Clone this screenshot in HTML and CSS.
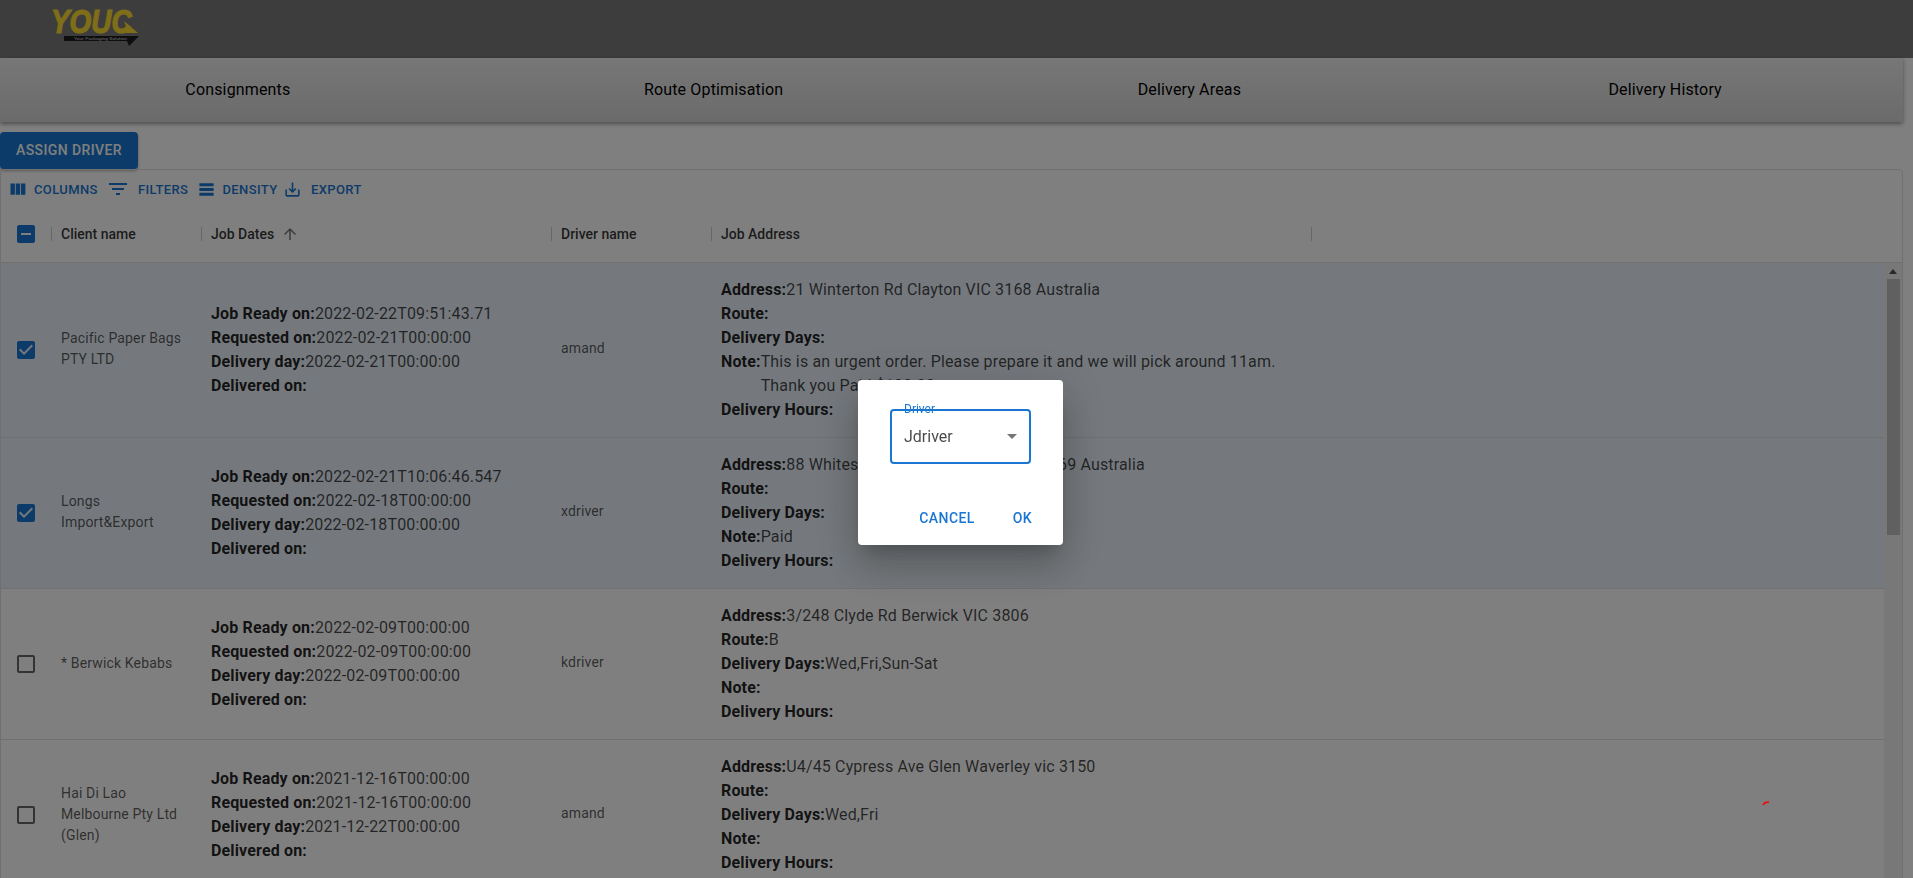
FILE: index.html
```html
<!DOCTYPE html>
<html lang="en">
<head>
    <meta charset="UTF-8">
    <meta name="viewport" content="width=device-width, initial-scale=1.0">
    <title>Consignments</title>
    <link rel="stylesheet" href="styles.css">
</head>
<body>
    <!-- Shared icons -->
    <svg class="icon-defs" aria-hidden="true">
        <symbol id="ic-checked" viewBox="0 0 24 24"><path d="M19 3H5c-1.11 0-2 .9-2 2v14c0 1.1.89 2 2 2h14c1.11 0 2-.9 2-2V5c0-1.1-.89-2-2-2zm-9 14l-5-5 1.41-1.41L10 14.17l7.59-7.59L19 8l-9 9z"/></symbol>
        <symbol id="ic-blank" viewBox="0 0 24 24"><path d="M19 5v14H5V5h14m0-2H5c-1.1 0-2 .9-2 2v14c0 1.1.9 2 2 2h14c1.1 0 2-.9 2-2V5c0-1.1-.9-2-2-2z"/></symbol>
        <symbol id="ic-partial" viewBox="0 0 24 24"><path d="M19 3H5c-1.1 0-2 .9-2 2v14c0 1.1.9 2 2 2h14c1.1 0 2-.9 2-2V5c0-1.1-.9-2-2-2zm-2 10H7v-2h10v2z"/></symbol>
    </svg>

    <header class="topbar">
        <svg class="logo" width="130" height="48" viewBox="0 0 130 48" role="img" aria-label="YOUC">
            <text class="logo-word" transform="translate(1 28) scale(0.82 1)">YOUC</text>
            <polygon class="logo-gold" points="74,16 88,28 70,28 70,24 77,24"/>
            <polygon class="logo-band" points="14,31 89,31 79,41 77,36 14,36"/>
            <text class="logo-tag" x="24" y="35" textLength="53" lengthAdjust="spacingAndGlyphs">Your Packaging Solution</text>
        </svg>
    </header>

    <nav class="tabs">
        <a class="tab">Consignments</a>
        <a class="tab">Route Optimisation</a>
        <a class="tab">Delivery Areas</a>
        <a class="tab">Delivery History</a>
    </nav>

    <button class="assign-btn">ASSIGN DRIVER</button>

    <section class="grid">
        <div class="toolbar">
            <span class="tool tool-columns">
                <svg class="tool-icon" width="21" height="21" viewBox="0 0 24 24"><path d="M10 18h5V5h-5v13zm-6 0h5V5H4v13zM16 5v13h5V5h-5z"/></svg>
                COLUMNS
            </span>
            <span class="tool tool-filters">
                <svg class="tool-icon" width="24" height="24" viewBox="0 0 24 24"><path d="M10 18h4v-2h-4v2zM3 6v2h18V6H3zm3 7h12v-2H6v2z"/></svg>
                FILTERS
            </span>
            <span class="tool tool-density">
                <svg class="tool-icon" width="19" height="19" viewBox="0 0 24 24"><path d="M21 8H3V4h18v4zm0 2H3v4h18v-4zm0 6H3v4h18v-4z"/></svg>
                DENSITY
            </span>
            <span class="tool tool-export">
                <svg class="tool-icon" width="19" height="19" viewBox="0 0 24 24"><path d="M19 12v7H5v-7H3v7c0 1.1.9 2 2 2h14c1.1 0 2-.9 2-2v-7h-2zm-6 .67l2.59-2.58L17 11.5l-5 5-5-5 1.41-1.41L11 12.67V3h2z"/></svg>
                EXPORT
            </span>
        </div>

        <div class="row-cols head-row">
            <div class="check-cell"><svg class="check on" width="24" height="24"><use href="#ic-partial"/></svg></div>
            <div class="head-cell">Client name</div>
            <div class="head-cell">Job Dates
                <svg class="sort-icon" width="18" height="18" viewBox="0 0 24 24"><path d="M4 12l1.41 1.41L11 7.83V20h2V7.83l5.58 5.59L20 12l-8-8-8 8z"/></svg>
            </div>
            <div class="head-cell">Driver name</div>
            <div class="head-cell head-last">Job Address</div>
        </div>

        <div class="grid-body">
            <div class="rows">
                <div class="row-cols row selected">
                    <div class="check-cell"><svg class="check on" width="24" height="24"><use href="#ic-checked"/></svg></div>
                    <div class="cell client">Pacific Paper Bags PTY LTD</div>
                    <div class="cell details">
                        <p><b>Job Ready on:</b>2022-02-22T09:51:43.71</p>
                        <p><b>Requested on:</b>2022-02-21T00:00:00</p>
                        <p><b>Delivery day:</b>2022-02-21T00:00:00</p>
                        <p><b>Delivered on:</b></p>
                    </div>
                    <div class="cell">amand</div>
                    <div class="cell details">
                        <p><b>Address:</b>21 Winterton Rd Clayton VIC 3168 Australia</p>
                        <p><b>Route:</b></p>
                        <p><b>Delivery Days:</b></p>
                        <p class="note"><b>Note:</b><span>This is an urgent order. Please prepare it and we will pick around 11am.<br>Thank you Paid $100.00</span></p>
                        <p><b>Delivery Hours:</b></p>
                    </div>
                </div>

                <div class="row-cols row selected">
                    <div class="check-cell"><svg class="check on" width="24" height="24"><use href="#ic-checked"/></svg></div>
                    <div class="cell client">Longs Import&amp;Export</div>
                    <div class="cell details">
                        <p><b>Job Ready on:</b>2022-02-21T10:06:46.547</p>
                        <p><b>Requested on:</b>2022-02-18T00:00:00</p>
                        <p><b>Delivery day:</b>2022-02-18T00:00:00</p>
                        <p><b>Delivered on:</b></p>
                    </div>
                    <div class="cell">xdriver</div>
                    <div class="cell details">
                        <p><b>Address:</b>88 Whites Lane, Clayton South VIC 3169 Australia</p>
                        <p><b>Route:</b></p>
                        <p><b>Delivery Days:</b></p>
                        <p><b>Note:</b>Paid</p>
                        <p><b>Delivery Hours:</b></p>
                    </div>
                </div>

                <div class="row-cols row">
                    <div class="check-cell"><svg class="check off" width="24" height="24"><use href="#ic-blank"/></svg></div>
                    <div class="cell client">* Berwick Kebabs</div>
                    <div class="cell details">
                        <p><b>Job Ready on:</b>2022-02-09T00:00:00</p>
                        <p><b>Requested on:</b>2022-02-09T00:00:00</p>
                        <p><b>Delivery day:</b>2022-02-09T00:00:00</p>
                        <p><b>Delivered on:</b></p>
                    </div>
                    <div class="cell">kdriver</div>
                    <div class="cell details">
                        <p><b>Address:</b>3/248 Clyde Rd Berwick VIC 3806</p>
                        <p><b>Route:</b>B</p>
                        <p><b>Delivery Days:</b>Wed,Fri,Sun-Sat</p>
                        <p><b>Note:</b></p>
                        <p><b>Delivery Hours:</b></p>
                    </div>
                </div>

                <div class="row-cols row">
                    <div class="check-cell"><svg class="check off" width="24" height="24"><use href="#ic-blank"/></svg></div>
                    <div class="cell client">Hai Di Lao Melbourne Pty Ltd (Glen)</div>
                    <div class="cell details">
                        <p><b>Job Ready on:</b>2021-12-16T00:00:00</p>
                        <p><b>Requested on:</b>2021-12-16T00:00:00</p>
                        <p><b>Delivery day:</b>2021-12-22T00:00:00</p>
                        <p><b>Delivered on:</b></p>
                    </div>
                    <div class="cell">amand</div>
                    <div class="cell details">
                        <p><b>Address:</b>U4/45 Cypress Ave Glen Waverley vic 3150</p>
                        <p><b>Route:</b></p>
                        <p><b>Delivery Days:</b>Wed,Fri</p>
                        <p><b>Note:</b></p>
                        <p><b>Delivery Hours:</b></p>
                    </div>
                </div>
            </div>

            <div class="scrollbar">
                <span class="scroll-arrow"></span>
                <span class="scroll-thumb"></span>
            </div>
        </div>
    </section>

    <!-- Assign driver dialog -->
    <div class="backdrop">
        <div class="dialog">
            <div class="field">
                <label class="field-label">Driver</label>
                <span class="field-value">Jdriver</span>
                <span class="field-arrow"></span>
            </div>
            <div class="dialog-actions">
                <button class="text-btn">CANCEL</button>
                <button class="text-btn">OK</button>
            </div>
        </div>
        <svg class="red-mark" width="8" height="5" viewBox="0 0 8 5"><path d="M1 4C2 2 4 1 7 1" fill="none" stroke="#f00" stroke-width="1.6"/></svg>
    </div>
</body>
</html>
```

FILE: styles.css
```css
* {
    box-sizing: border-box;
}

html, body {
    height: 100%;
}

body {
    font-family: Roboto, "Liberation Sans", sans-serif;
    background-color: #fff;
    color: rgba(0, 0, 0, 0.87);
    margin: 0;
    overflow: hidden;
}

.icon-defs {
    display: none;
}

.topbar {
    height: 58px;
    background-color: #7a7a7a;
    padding: 5px 0 0 50px;
}

.logo {
    display: block;
}

.logo-word {
    font-family: "Liberation Sans", sans-serif;
    font-size: 34px;
    font-weight: 700;
    font-style: italic;
    fill: #ffdc30;
    stroke: #ffdc30;
    stroke-width: 1.2px;
}

.logo-gold {
    fill: #ffdc30;
}

.logo-band {
    fill: #1a1a1a;
}

.logo-tag {
    font-family: "Liberation Sans", sans-serif;
    font-size: 4px;
    fill: #ddd;
}

.tabs {
    display: flex;
    height: 64px;
    margin-right: 10px;
    background: linear-gradient(#eee, #d6d6d6);
    box-shadow: 0 2px 4px rgba(0, 0, 0, 0.4);
    border-bottom-right-radius: 2px;
}

.tab {
    flex: 1;
    display: flex;
    align-items: center;
    justify-content: center;
    padding-bottom: 2px;
    font-size: 16px;
    letter-spacing: 0.01em;
    color: #000;
}

.assign-btn {
    display: block;
    width: 138px;
    height: 37px;
    margin: 10px 0 0;
    padding: 0 0 2px;
    border: 0;
    border-radius: 4px;
    background-color: #1976d2;
    color: #fff;
    font-family: inherit;
    font-size: 14px;
    font-weight: 500;
    letter-spacing: 0.02857em;
    box-shadow: 0 2px 3px rgba(0, 0, 0, 0.3);
}

.grid {
    margin-right: 10px;
    height: 740px;
    border: 1px solid #e0e0e0;
    border-radius: 4px;
    overflow: hidden;
}

.toolbar {
    display: flex;
    align-items: center;
    height: 40px;
    padding: 0 0 2px 8px;
    color: #1976d2;
    font-size: 13px;
    font-weight: 500;
    letter-spacing: 0.02857em;
}

.tool {
    display: flex;
    align-items: center;
}

.tool-icon {
    fill: currentColor;
    flex: none;
}

.tool-columns {
    width: 99.5px;
    gap: 6px;
    margin-left: -2px;
}

.tool-filters {
    width: 92px;
    gap: 8.5px;
    margin-left: -1px;
}

.tool-density {
    width: 86.5px;
    gap: 7px;
    margin-left: -1px;
}

.tool-export {
    gap: 9px;
}

.row-cols {
    display: grid;
    grid-template-columns: 50px 150px 350px 160px 601px;
}

.head-row {
    height: 53px;
    padding-bottom: 5px;
    align-items: center;
    border-bottom: 1px solid #e0e0e0;
    font-size: 14px;
    font-weight: 500;
}

.check-cell {
    display: flex;
    align-items: center;
    padding-left: 13px;
}

.check {
    display: block;
}

.check.on {
    fill: #1976d2;
}

.check.off {
    fill: rgba(0, 0, 0, 0.6);
}

.head-cell {
    display: flex;
    align-items: center;
    height: 14px;
    padding-left: 9px;
    border-left: 1px solid #ccc;
    color: rgba(0, 0, 0, 0.8);
}

.head-last {
    border-right: 1px solid #ccc;
}

.sort-icon {
    fill: rgba(0, 0, 0, 0.54);
    margin-left: 7px;
}

.grid-body {
    display: flex;
}

.rows {
    flex: 1;
    min-width: 0;
}

.row {
    padding: 15px 0;
    border-bottom: 1px solid #e0e0e0;
}

.row.selected {
    background-color: #ebf3fb;
}

.cell {
    display: flex;
    align-items: center;
    padding: 0 10px 3px;
    font-size: 14px;
    line-height: 21px;
    letter-spacing: 0.01071em;
    color: rgba(0, 0, 0, 0.65);
}

.client {
    padding: 0 16px 2px 10px;
}

.details {
    display: block;
    align-self: center;
    padding: 0 10px;
    font-size: 16px;
    line-height: 24px;
    letter-spacing: 0.00938em;
    color: rgba(0, 0, 0, 0.72);
}

.details p {
    margin: 0;
}

.details b {
    font-weight: 700;
    color: rgba(0, 0, 0, 0.87);
}

.note {
    display: flex;
}

.scrollbar {
    flex: none;
    width: 18px;
    background-color: #f1f1f1;
    display: flex;
    flex-direction: column;
    align-items: center;
    padding-top: 6px;
}

.scroll-arrow {
    width: 0;
    height: 0;
    border-left: 4px solid transparent;
    border-right: 4px solid transparent;
    border-bottom: 5px solid #505050;
}

.scroll-thumb {
    width: 13px;
    height: 256px;
    margin-top: 5px;
    background-color: #c1c1c1;
}

.backdrop {
    position: fixed;
    inset: 0;
    background-color: rgba(0, 0, 0, 0.5);
}

.dialog {
    position: absolute;
    left: 858px;
    top: 380px;
    width: 205px;
    height: 165px;
    padding: 29px 32px 0;
    background-color: #fff;
    border-radius: 4px;
    box-shadow: 0 11px 15px -7px rgba(0, 0, 0, 0.2), 0 24px 38px 3px rgba(0, 0, 0, 0.14), 0 9px 46px 8px rgba(0, 0, 0, 0.12);
}

.field {
    position: relative;
    display: flex;
    align-items: center;
    justify-content: space-between;
    width: 141px;
    height: 55px;
    padding: 0 12px;
    border: 2px solid #1976d2;
    border-radius: 4px;
}

.field-label {
    position: absolute;
    left: 12px;
    top: -9px;
    font-size: 12px;
    line-height: 14px;
    color: #1976d2;
}

.field-value {
    font-size: 16px;
    color: rgba(0, 0, 0, 0.72);
}

.field-arrow {
    width: 0;
    height: 0;
    border-left: 5px solid transparent;
    border-right: 5px solid transparent;
    border-top: 5px solid #757575;
}

.dialog-actions {
    display: flex;
    justify-content: flex-end;
    gap: 38px;
    margin: 45px -1px 0 0;
}

.text-btn {
    padding: 0;
    border: 0;
    background: none;
    font-family: inherit;
    font-size: 14px;
    font-weight: 500;
    line-height: 18px;
    letter-spacing: 0.02857em;
    color: #1976d2;
}

.red-mark {
    position: absolute;
    left: 1762px;
    top: 801px;
}
```
